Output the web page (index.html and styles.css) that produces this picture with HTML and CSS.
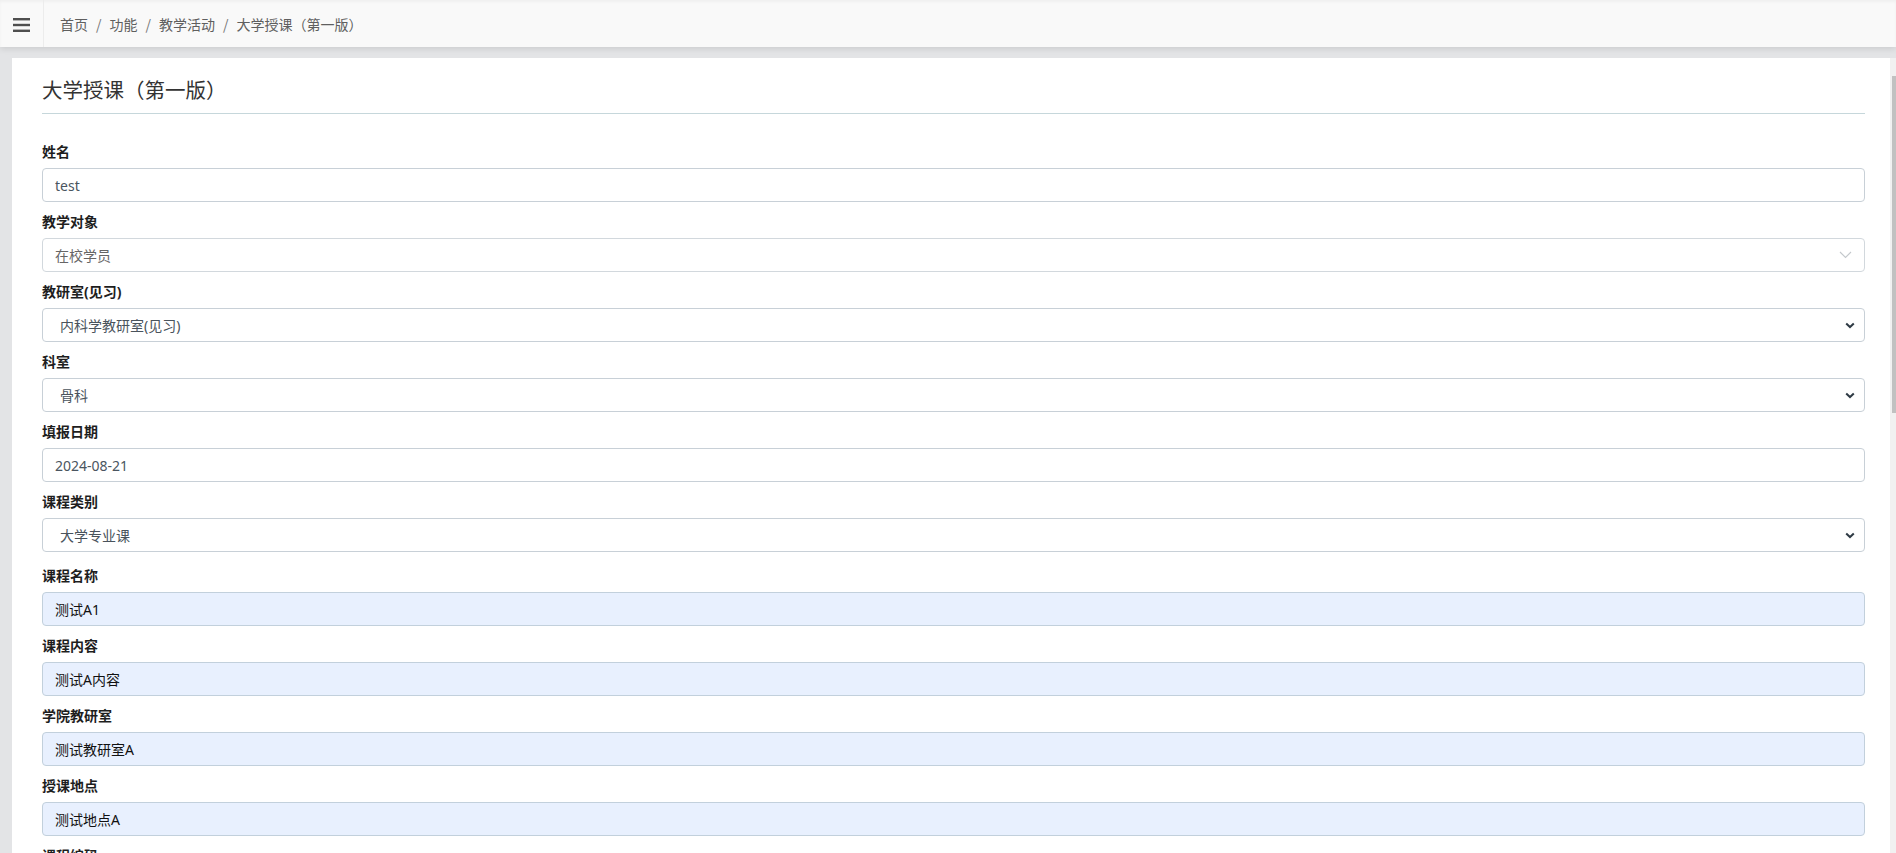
FILE: index.html
```html
<!DOCTYPE html>
<html lang="zh-CN">
<head>
    <meta charset="UTF-8">
    <meta name="viewport" content="width=device-width, initial-scale=1.0">
    <title>大学授课（第一版）</title>
    <link rel="stylesheet" href="styles.css">
</head>
<body>
    <header class="topbar">
        <button type="button" class="menu-toggle" aria-label="菜单">
            <svg width="17" height="14" viewBox="0 0 17 14">
                <rect x="0" y="0" width="17" height="2.4" fill="#4f4f4f"/>
                <rect x="0" y="5.8" width="17" height="2.4" fill="#4f4f4f"/>
                <rect x="0" y="11.6" width="17" height="2.4" fill="#4f4f4f"/>
            </svg>
        </button>
        <nav class="crumbs">
            <a href="#">首页</a><span class="sep">/</span>
            <a href="#">功能</a><span class="sep">/</span>
            <a href="#">教学活动</a><span class="sep">/</span>
            <span class="current">大学授课（第一版）</span>
        </nav>
    </header>

    <main class="page">
        <div class="scroller" id="scroller">
            <section class="card">
                <h2 class="card-title">大学授课（第一版）</h2>

                <form class="entry-form">
                    <div class="field">
                        <label for="xm">姓名</label>
                        <input type="text" id="xm" class="ctl" value="test">
                    </div>
                    <div class="field">
                        <label>教学对象</label>
                        <div class="pick">
                            <span class="pick-text">在校学员</span>
                            <svg class="pick-caret" width="13" height="8" viewBox="0 0 13 8"><path d="M1 1l5.5 5.5L12 1" fill="none" stroke="#c4c8cc" stroke-width="1.1"/></svg>
                        </div>
                    </div>
                    <div class="field">
                        <label for="jys">教研室(见习)</label>
                        <div class="sel-wrap">
                            <select id="jys" class="ctl sel">
                                <option>内科学教研室(见习)</option>
                                <option>外科学教研室(见习)</option>
                            </select>
                            <svg class="sel-caret" width="10" height="7" viewBox="0 0 10 7"><path d="M1.2 1.4l3.8 3.6 3.8-3.6" fill="none" stroke="#2f3b45" stroke-width="2"/></svg>
                        </div>
                    </div>
                    <div class="field">
                        <label for="ks">科室</label>
                        <div class="sel-wrap">
                            <select id="ks" class="ctl sel">
                                <option>骨科</option>
                                <option>心内科</option>
                            </select>
                            <svg class="sel-caret" width="10" height="7" viewBox="0 0 10 7"><path d="M1.2 1.4l3.8 3.6 3.8-3.6" fill="none" stroke="#2f3b45" stroke-width="2"/></svg>
                        </div>
                    </div>
                    <div class="field">
                        <label for="tbrq">填报日期</label>
                        <input type="text" id="tbrq" class="ctl" value="2024-08-21">
                    </div>
                    <div class="field">
                        <label for="kclb">课程类别</label>
                        <div class="sel-wrap">
                            <select id="kclb" class="ctl sel">
                                <option>大学专业课</option>
                                <option>大学公共课</option>
                            </select>
                            <svg class="sel-caret" width="10" height="7" viewBox="0 0 10 7"><path d="M1.2 1.4l3.8 3.6 3.8-3.6" fill="none" stroke="#2f3b45" stroke-width="2"/></svg>
                        </div>
                    </div>

                    <div class="course-block">
                        <div class="field">
                            <label for="kcmc">课程名称</label>
                            <input type="text" id="kcmc" class="ctl filled" value="测试A1">
                        </div>
                        <div class="field">
                            <label for="kcnr">课程内容</label>
                            <input type="text" id="kcnr" class="ctl filled" value="测试A内容">
                        </div>
                        <div class="field">
                            <label for="xyjys">学院教研室</label>
                            <input type="text" id="xyjys" class="ctl filled" value="测试教研室A">
                        </div>
                        <div class="field">
                            <label for="skdd">授课地点</label>
                            <input type="text" id="skdd" class="ctl filled" value="测试地点A">
                        </div>
                        <div class="field">
                            <label for="kcbm">课程编码</label>
                            <input type="text" id="kcbm" class="ctl filled" value="A001">
                        </div>
                    </div>

                    <div class="field">
                        <label for="zjjs">主讲教师</label>
                        <input type="text" id="zjjs" class="ctl" value="test">
                    </div>
                    <div class="field">
                        <label for="zc">职称</label>
                        <input type="text" id="zc" class="ctl" value="">
                    </div>
                    <div class="field">
                        <label for="skxs">授课学时</label>
                        <input type="text" id="skxs" class="ctl" value="2">
                    </div>
                    <div class="field">
                        <label for="skrq">授课日期</label>
                        <input type="text" id="skrq" class="ctl" value="2024-08-21">
                    </div>
                    <div class="field">
                        <label for="kssj">开始时间</label>
                        <input type="text" id="kssj" class="ctl" value="08:00">
                    </div>
                    <div class="field">
                        <label for="jssj">结束时间</label>
                        <input type="text" id="jssj" class="ctl" value="09:40">
                    </div>
                    <div class="field">
                        <label for="skbj">授课班级</label>
                        <input type="text" id="skbj" class="ctl" value="">
                    </div>
                    <div class="field">
                        <label for="skrs">授课人数</label>
                        <input type="text" id="skrs" class="ctl" value="">
                    </div>
                    <div class="field">
                        <label for="bz">备注</label>
                        <textarea id="bz" class="ctl note" rows="6"></textarea>
                    </div>
                    <div class="actions">
                        <button type="button" class="btn btn-save">保存</button>
                        <button type="button" class="btn btn-back">返回</button>
                    </div>
                </form>
            </section>
        </div>
        <div class="rail" id="rail"><div class="rail-thumb" id="railThumb"></div></div>
    </main>

    <script>
        // thin scroll rail next to the form, kept in step with the scroller
        const scroller = document.getElementById('scroller');
        const rail = document.getElementById('rail');
        const thumb = document.getElementById('railThumb');

        function syncThumb() {
            const track = rail.clientHeight - 36;
            const h = Math.max(30, track * scroller.clientHeight / scroller.scrollHeight);
            const range = Math.max(1, scroller.scrollHeight - scroller.clientHeight);
            thumb.style.height = h + 'px';
            thumb.style.top = (18 + (track - h) * scroller.scrollTop / range) + 'px';
        }

        scroller.addEventListener('scroll', syncThumb);
        window.addEventListener('resize', syncThumb);
        syncThumb();
    </script>
</body>
</html>
```

FILE: styles.css
```css
html, body {
    height: 100%;
}
body {
    margin: 0;
    display: flex;
    flex-direction: column;
    overflow: hidden;
    background-color: #e3e4e6;
    font-family: "Noto Sans", "Noto Sans CJK SC", sans-serif;
    color: #222;
}

/* top bar */
.topbar {
    flex: 0 0 47px;
    display: flex;
    align-items: stretch;
    background-color: #f9f9f9;
    box-shadow: inset 0 2px 3px rgba(0, 0, 0, 0.04), 0 2px 6px rgba(0, 0, 0, 0.1);
    position: relative;
    z-index: 2;
}
.menu-toggle {
    width: 44px;
    padding: 3px 0 0 0;
    border: none;
    border-right: 1px solid #ececec;
    background: transparent;
    display: flex;
    align-items: center;
    justify-content: center;
    cursor: pointer;
}
.crumbs {
    display: flex;
    align-items: center;
    padding: 1px 0 0 16px;
    font-family: "Noto Sans CJK SC", sans-serif;
    font-size: 14px;
    color: #5f5f5f;
}
.crumbs a {
    color: #5f5f5f;
    text-decoration: none;
}
.crumbs .sep {
    padding: 0 8px;
    color: #777;
}

/* content area */
.page {
    flex: 1;
    min-height: 0;
    padding: 11px 0 0 12px;
    display: flex;
}
.scroller {
    flex: 1;
    overflow-y: auto;
    background-color: #fff;
    scrollbar-width: none;
}
.scroller::-webkit-scrollbar {
    display: none;
}
.rail {
    flex: 0 0 6px;
    position: relative;
    background-color: #f1f1f1;
}
.rail-thumb {
    position: absolute;
    left: 2px;
    right: 0;
    top: 18px;
    height: 306px;
    background-color: #c1c1c1;
}

.card {
    padding: 0 25px 150px 30px;
    background: #fff;
}
.card-title {
    margin: 0;
    padding: 17px 0 10px;
    font-family: "Noto Sans CJK SC", sans-serif;
    font-size: 20.5px;
    line-height: 28px;
    font-weight: 400;
    color: #333;
    border-bottom: 1px solid #c6d7db;
}

/* form */
.entry-form {
    padding-top: 28px;
}
.field {
    margin-bottom: 10px;
}
.field label {
    display: block;
    margin-bottom: 6px;
    font-size: 14px;
    line-height: 20px;
    font-weight: 700;
    color: #1e1e1e;
}
.course-block {
    padding-top: 4px;
}
.ctl {
    display: block;
    width: 100%;
    height: 34px;
    box-sizing: border-box;
    padding: 0 12px;
    border: 1px solid #c8d0d7;
    border-radius: 4px;
    background: #fff;
    font-family: "Noto Sans", "Noto Sans CJK SC", sans-serif;
    font-size: 14px;
    color: #4a5560;
    outline: none;
}
.ctl.filled {
    background-color: #e8f0fe;
    border-color: #c2d0dc;
    color: #111;
}
.ctl.note {
    height: auto;
    padding: 8px 12px;
    resize: vertical;
}

.sel-wrap {
    position: relative;
}
.sel {
    appearance: none;
    -webkit-appearance: none;
    padding-left: 17px;
    color: #49535c;
}
.sel-caret {
    position: absolute;
    right: 10px;
    top: 14px;
    pointer-events: none;
}

.pick {
    height: 34px;
    box-sizing: border-box;
    display: flex;
    align-items: center;
    justify-content: space-between;
    padding: 0 12px;
    border: 1px solid #d2d8dd;
    border-radius: 4px;
    font-size: 14px;
    color: #666;
    cursor: pointer;
}

.actions {
    display: flex;
    justify-content: center;
    gap: 12px;
    padding-top: 20px;
}
.btn {
    padding: 7px 26px;
    border: none;
    border-radius: 4px;
    font-size: 14px;
    font-family: "Noto Sans", "Noto Sans CJK SC", sans-serif;
    color: #fff;
    cursor: pointer;
}
.btn-save {
    background-color: #1ab394;
}
.btn-back {
    background-color: #999;
}
```
